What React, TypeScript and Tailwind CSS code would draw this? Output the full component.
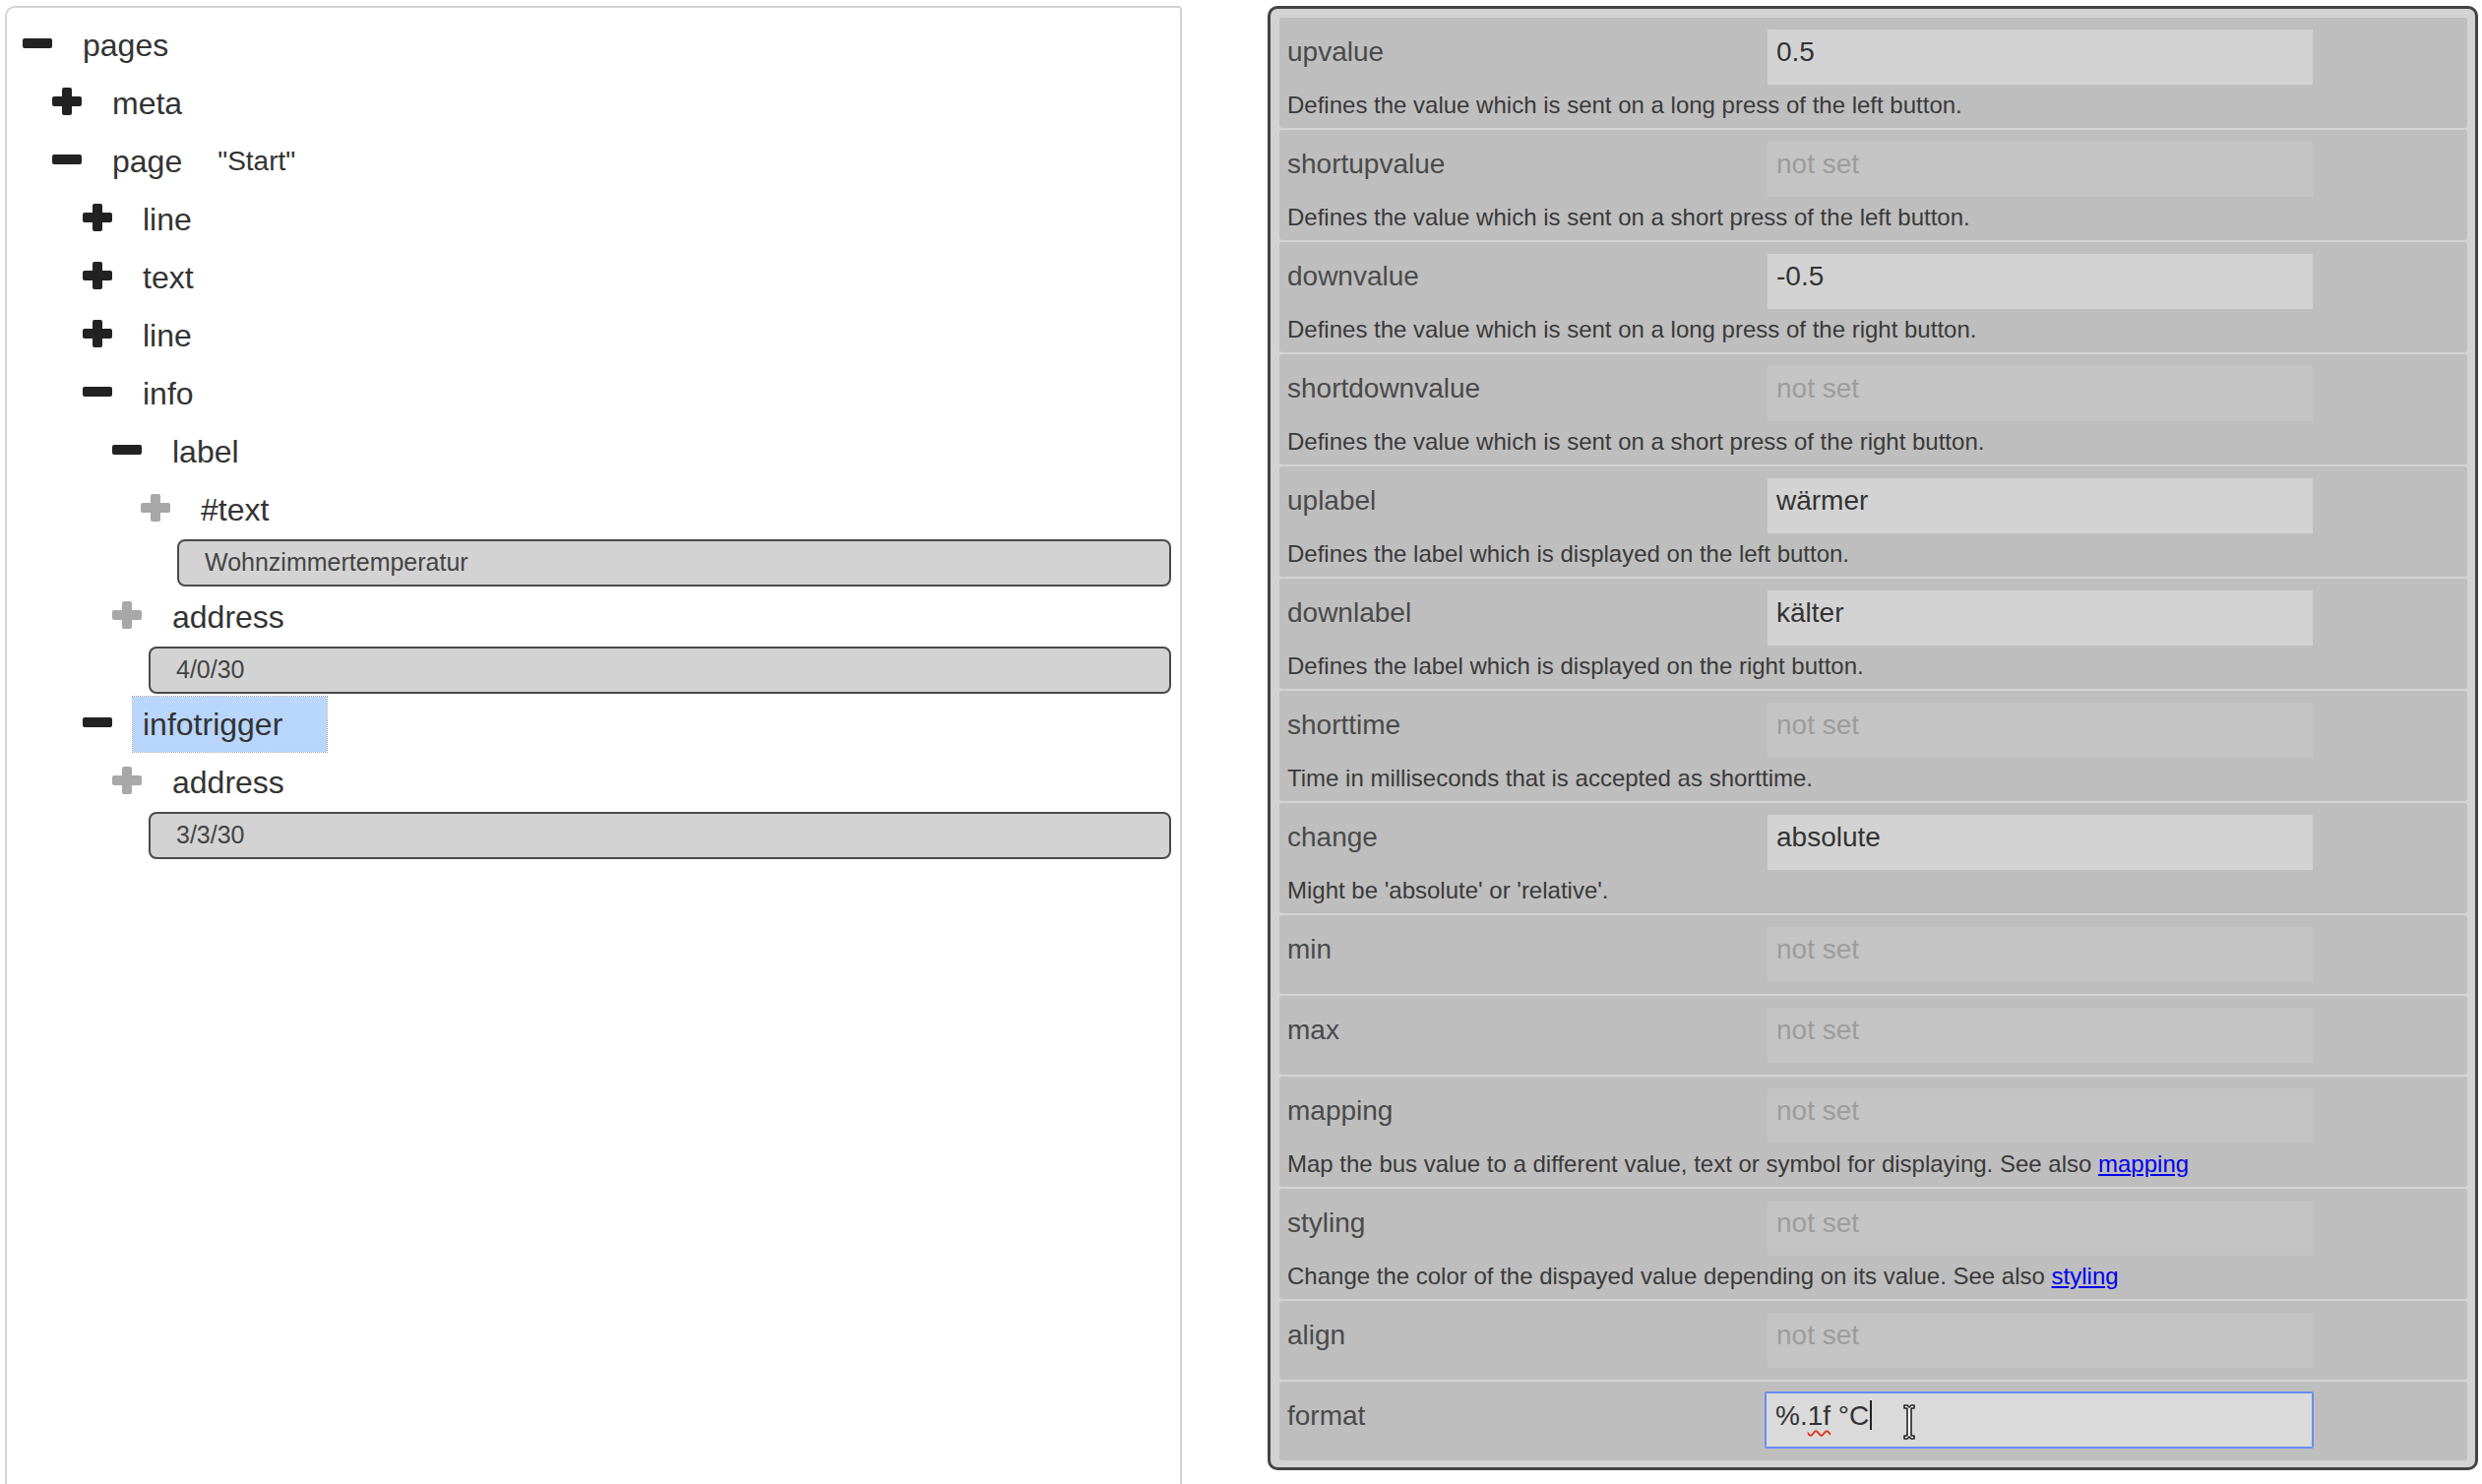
import React from "react";

type TreeItem = {
  level: number;
  icon: "minus" | "plus" | "leaf";
  label: string;
  extra?: string;
  input?: string;
  selected?: boolean;
};

const tree: TreeItem[] = [
  { level: 0, icon: "minus", label: "pages" },
  { level: 1, icon: "plus", label: "meta" },
  { level: 1, icon: "minus", label: "page", extra: '"Start"' },
  { level: 2, icon: "plus", label: "line" },
  { level: 2, icon: "plus", label: "text" },
  { level: 2, icon: "plus", label: "line" },
  { level: 2, icon: "minus", label: "info" },
  { level: 3, icon: "minus", label: "label" },
  { level: 4, icon: "leaf", label: "#text", input: "Wohnzimmertemperatur" },
  { level: 3, icon: "leaf", label: "address", input: "4/0/30" },
  { level: 2, icon: "minus", label: "infotrigger", selected: true },
  { level: 3, icon: "leaf", label: "address", input: "3/3/30" },
];

const levelPad = ["pl-[16px]", "pl-[46px]", "pl-[77px]", "pl-[107px]", "pl-[136px]"];
const inputPad = ["pl-[53px]", "pl-[83px]", "pl-[114px]", "pl-[144px]", "pl-[173px]"];

function Icon({ kind }: { kind: TreeItem["icon"] }) {
  if (kind === "minus") {
    return (
      <div className="w-[30px] h-[28px] flex items-center">
        <div className="w-[30px] h-[10px] rounded-[2px] bg-[#222222] -translate-y-[2px]" />
      </div>
    );
  }
  const color = kind === "plus" ? "#222222" : "#a8a8a8";
  return (
    <svg width="30" height="28" viewBox="0 0 30 28" className="-translate-y-[2px]">
      <rect x="0" y="9" width="30" height="10" rx="2" fill={color} />
      <rect x="10" y="0" width="10" height="28" rx="2" fill={color} />
    </svg>
  );
}

function TreeRow({ item }: { item: TreeItem }) {
  return (
    <>
      <div className={`h-[59px] flex items-center ${levelPad[item.level]}`}>
        <Icon kind={item.icon} />
        <div
          className={`ml-[21px] h-[56px] flex items-center pl-[10px] pr-[45px] text-[32px] text-[#333333] ${
            item.selected ? "bg-[#b9d6fc] outline outline-1 outline-dotted outline-[#a0a0a0]" : ""
          }`}
        >
          <span>{item.label}</span>
          {item.extra && <span className="ml-[36px] text-[28px]">{item.extra}</span>}
        </div>
      </div>
      {item.input && (
        <div className={`h-[50px] pt-[1px] pr-[9px] ${inputPad[item.level]}`}>
          <div className="h-[48px] rounded-[8px] border-2 border-[#4a4a4a] bg-[#d3d3d3] flex items-center pl-[26px] text-[25px] text-[#444444]">
            {item.input}
          </div>
        </div>
      )}
    </>
  );
}

type Prop = {
  name: string;
  value?: string;
  desc?: string;
  link?: string;
  focused?: boolean;
};

const props: Prop[] = [
  { name: "upvalue", value: "0.5", desc: "Defines the value which is sent on a long press of the left button." },
  { name: "shortupvalue", desc: "Defines the value which is sent on a short press of the left button." },
  { name: "downvalue", value: "-0.5", desc: "Defines the value which is sent on a long press of the right button." },
  { name: "shortdownvalue", desc: "Defines the value which is sent on a short press of the right button." },
  { name: "uplabel", value: "wärmer", desc: "Defines the label which is displayed on the left button." },
  { name: "downlabel", value: "kälter", desc: "Defines the label which is displayed on the right button." },
  { name: "shorttime", desc: "Time in milliseconds that is accepted as shorttime." },
  { name: "change", value: "absolute", desc: "Might be 'absolute' or 'relative'." },
  { name: "min" },
  { name: "max" },
  {
    name: "mapping",
    desc: "Map the bus value to a different value, text or symbol for displaying. See also ",
    link: "mapping",
  },
  {
    name: "styling",
    desc: "Change the color of the dispayed value depending on its value. See also ",
    link: "styling",
  },
  { name: "align" },
  { name: "format", focused: true },
];

function IBeam() {
  return (
    <svg width="14" height="38" viewBox="0 0 14 38" className="absolute left-[138px] top-[10px]">
      <path
        d="M2 2 H5 L7 4 L9 2 H12 V5 H9 V33 H12 V36 H9 L7 34 L5 36 H2 V33 H5 V5 H2 Z"
        fill="#ffffff"
        stroke="#222222"
        strokeWidth="1.6"
        strokeLinejoin="round"
      />
    </svg>
  );
}

function PropRow({ p }: { p: Prop }) {
  const hasDesc = !!p.desc;
  return (
    <div className={`${hasDesc ? "h-[112px]" : "h-[80px]"} bg-[#bebebe] rounded-[3px] pt-[12px]`}>
      <div className="flex h-[56px]">
        <div className="w-[496px] pl-[8px] pt-[7px] text-[28px] leading-[32px] text-[#4a4a4a]">{p.name}</div>
        {p.focused ? (
          <div className="relative w-[558px] h-[58px] -mt-[2px] -ml-[3px] border-2 border-[#6a8cf2] rounded-[2px] bg-[#dadada] pl-[9px] pt-[7px] text-[28px] leading-[32px] text-[#333333] flex items-start">
            <span>%.</span>
            <span className="underline decoration-wavy decoration-[#e0301e] decoration-[2px] underline-offset-[5px]">1f</span>
            <span>&nbsp;°C</span>
            <span className="inline-block w-[2px] h-[30px] bg-[#222222] ml-[1px]" />
            <IBeam />
          </div>
        ) : (
          <div
            className={`w-[554px] h-[56px] pl-[9px] pt-[7px] text-[28px] leading-[32px] ${
              p.value ? "bg-[#d3d3d3] text-[#333333]" : "bg-[#c4c4c4] text-[#9c9c9c]"
            }`}
          >
            {p.value ?? "not set"}
          </div>
        )}
      </div>
      {hasDesc && (
        <div className="mt-[7px] pl-[8px] text-[24px] leading-[28px] text-[#3a3a3a]">
          {p.desc}
          {p.link && <span className="text-[#0000ee] underline">{p.link}</span>}
        </div>
      )}
    </div>
  );
}

export default function App() {
  return (
    <div
      className="w-[2522px] h-[1508px] overflow-hidden bg-white flex items-start pt-[6px] pl-[5px]"
      style={{ fontFamily: '"Liberation Sans", Arial, sans-serif' }}
    >
      <div className="w-[1196px] h-[1540px] shrink-0 border-2 border-[#d2d2d2] rounded-tl-[10px] rounded-tr-[4px] pt-[8px]">
        {tree.map((item, i) => (
          <TreeRow key={i} item={item} />
        ))}
      </div>
      <div className="ml-[87px] w-[1230px] h-[1488px] shrink-0 border-[3px] border-[#444444] rounded-[10px] bg-[#d3d3d3] pt-[9px] pl-[9px] pr-[8px] flex flex-col gap-[2px]">
        {props.map((p) => (
          <PropRow key={p.name} p={p} />
        ))}
      </div>
    </div>
  );
}
